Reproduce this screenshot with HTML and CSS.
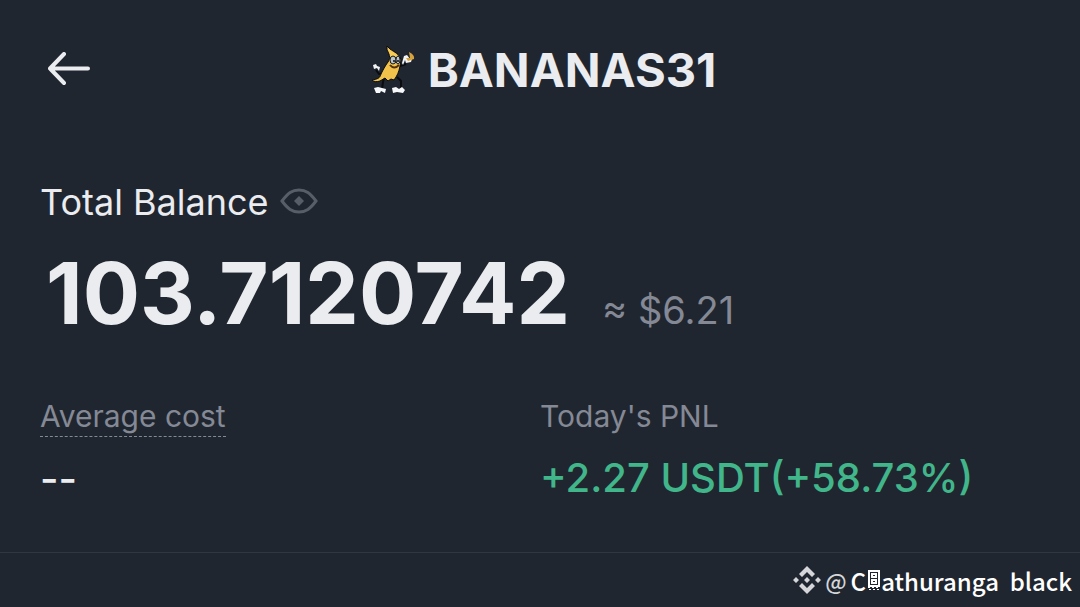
FILE: index.html
```html
<!DOCTYPE html>
<html lang="en">
<head>
    <title>BANANAS31</title>
    <meta charset="utf-8">
    <meta name="viewport" content="width=device-width, initial-scale=1">
    <link rel="stylesheet" href="styles.css">
</head>
<body>
    <header class="header">
        <button type="button" class="icon-btn back-btn" aria-label="Back">
            <svg width="44" height="36" viewBox="0 0 44 36" fill="none" stroke="#eaecef" stroke-width="4" stroke-linecap="round" stroke-linejoin="round">
                <path d="M16 2L2 16.500L16 31M2 16.500H40"/>
            </svg>
        </button>
        <div class="coin">
            <svg class="coin-logo" width="46" height="52" viewBox="0 0 46 52">
                <path d="M14 34L13 38L12 45M27 33L31 37L31 44M15 29L9 30L6 26M30 22L36 20" stroke="#090b0e" stroke-width="2" fill="none"/>
                <path d="M17 2L20 5C24 8 30 10 31 16L30 22C29 28 27 32 24 36L21 35L18 37L15 34L10 37C7 38 4 38 2 36C8 35 10 34 11 30C13 26 15 22 18 18C21 14 19 9 17 6Z" fill="#f0c14b" stroke="#090b0e"/>
                <path d="M18 5C24 9 28 11 28 15L21 13Z" fill="#f6cc59"/>
                <ellipse cx="23" cy="16" rx="3" ry="4" fill="#b9c4cd" stroke="#15181d"/>
                <ellipse cx="28" cy="16" rx="2" ry="4" fill="#b9c4cd" stroke="#15181d"/>
                <circle cx="24" cy="17" r="1" fill="#111"/><circle cx="28" cy="17" r="1" fill="#111"/>
                <path d="M20 21Q24 26 29 21" fill="none" stroke="#52320d" stroke-width="2"/>
                <path d="M3 21L6 20L7 22L10 23L9 27L7 24L4 25Z" fill="#f1f3f5"/>
                <path d="M32 19L34 12L37 11L40 15L42 15L41 18L36 19L35 16L33 21Z" fill="#f1f3f5"/>
                <path d="M39 8Q45 11 44 15L38 17L36 14L40 14Z" fill="#d6a23c"/>
                <path d="M4 44L8 43L12 44L16 45L15 49L11 47L10 49H6ZM22 44L26 43L29 45L32 43L35 46L33 49L27 48L23 49Z" fill="#f7f8fa"/>
            </svg>
            <h1 class="coin-name">BANANAS31</h1>
        </div>
    </header>

    <main class="content">
        <section class="balance">
            <div class="balance-label">
                <h2>Total Balance</h2>
                <button type="button" class="icon-btn" aria-label="Hide balance">
                    <svg width="40" height="28" viewBox="0 0 40 28">
                        <path d="M3 13C9 5 13 2 20 2S31 5 37 13C31 21 27 24 20 24S9 21 3 13Z" fill="none" stroke="#575e68" stroke-width="3"/>
                        <path d="M20 8L25 13L20 18L15 13Z" fill="#575e68"/>
                    </svg>
                </button>
            </div>
            <div class="balance-value">
                <strong class="amount">103.7120742</strong>
                <span class="fiat">≈ $6.21</span>
            </div>
        </section>

        <section class="stats">
            <div class="stat">
                <h3><span class="hint">Average cost</span></h3>
                <p class="stat-value">--</p>
            </div>
            <div class="stat">
                <h3>Today's PNL</h3>
                <p class="stat-value profit">+2.27 USDT(+58.73%)</p>
            </div>
        </section>
    </main>

    <footer class="footer">
        <svg width="28" height="28" viewBox="0 0 28 28" fill="#d4d6da">
            <path d="M14 0L22 8L19 11L14 6L9 11L6 8ZM14 28L6 20L9 17L14 22L19 17L22 20Z"/>
            <path d="M3 11L6 14L3 17L0 14ZM25 11L28 14L25 17L22 14ZM14 11L17 14L14 17L11 14Z"/>
        </svg>
        <span class="at">@</span>
        <span class="author">C<svg class="glyph" width="12" height="20" viewBox="0 0 12 20" fill="none" stroke="#fff" shape-rendering="crispEdges">
            <path d="M1 1H11V16H1Z" stroke-width="2"/>
            <path d="M4 4H8V7H4ZM4 10H8V13H4Z" stroke-width="2"/>
            <path d="M0 17.500H12M1 19.500H12" stroke-dasharray="2 2"/>
        </svg>athuranga&nbsp; black</span>
    </footer>
</body>
</html>
```
FILE: styles.css
```css
* {
    box-sizing: border-box;
}
body {
    margin: 0;
    min-height: 100vh;
    display: flex;
    flex-direction: column;
    background-color: #20262f;
    color: #eaecef;
    font-family: Inter, "Liberation Sans", sans-serif;
}
h1, h2, h3, p {
    margin: 0;
    font-weight: 400;
}
svg {
    display: block;
}
.icon-btn {
    padding: 0;
    border: none;
    background: none;
    cursor: pointer;
}
.header {
    display: grid;
    grid-template-columns: 1fr auto 1fr;
    align-items: center;
    padding: 40px 42px 0 48px;
}
.back-btn {
    justify-self: start;
}
.coin {
    display: flex;
    align-items: center;
    gap: 12px;
}
.coin-name {
    font-size: 47px;
    line-height: 60px;
    font-weight: 700;
}
.content {
    flex: 1;
    padding: 76px 40px 0;
}
.balance-label {
    display: flex;
    align-items: center;
    gap: 10px;
}
.balance-label h2 {
    font-size: 36px;
    line-height: 52px;
}
.balance-value {
    display: flex;
    align-items: baseline;
    gap: 32px;
    padding-left: 6px;
}
.amount {
    font-size: 85px;
    line-height: 132px;
    font-weight: 700;
}
.fiat {
    font-size: 38px;
    color: #848995;
}
.stats {
    display: grid;
    grid-template-columns: 1fr 1fr;
    margin-top: 36px;
}
.stat h3 {
    font-size: 30px;
    line-height: 40px;
    color: #848995;
}
.hint {
    display: inline-block;
    border-bottom: 1px dashed #848995;
}
.stat-value {
    font-size: 40px;
    line-height: 60px;
    margin-top: 12px;
    font-weight: 500;
}
.profit {
    color: #40b68a;
}
.footer {
    display: flex;
    align-items: center;
    justify-content: flex-end;
    height: 55px;
    padding: 0 8px;
    border-top: 1px solid #303741;
    font-family: "Noto Sans CJK SC", sans-serif;
    font-size: 24px;
    color: #fff;
}
.at {
    margin: 0 4px;
    font-size: 22px;
    font-weight: 500;
    color: #d4d6da;
}
.author {
    display: flex;
    align-items: center;
    font-weight: 500;
}
.glyph {
    margin: 0 1px 0 2px;
}
```
